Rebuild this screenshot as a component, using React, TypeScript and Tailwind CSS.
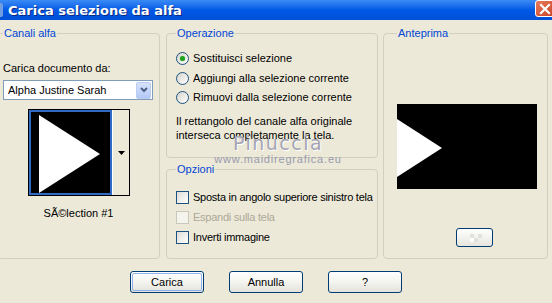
import React from "react";

const font = "font-['Liberation_Sans',Arial,sans-serif]";

function Radio({ checked, label }: { checked?: boolean; label: string }) {
  return (
    <div className="flex items-center h-[19.5px]">
      <div className="w-[13px] h-[13px] rounded-full border border-[#1c5180] bg-gradient-to-br from-[#d6d5cc] to-white flex items-center justify-center">
        {checked && <div className="w-[5px] h-[5px] rounded-full bg-[#21a121] shadow-[0_0_1px_#5bd35b]" />}
      </div>
      <span className="ml-[4px] text-black whitespace-nowrap">{label}</span>
    </div>
  );
}

function Check({ label, disabled }: { label: string; disabled?: boolean }) {
  return (
    <div className="flex items-center h-[20px]">
      <div
        className={
          disabled
            ? "shrink-0 w-[13px] h-[13px] border border-[#cac8bb] bg-[#f4f3ee]"
            : "shrink-0 w-[13px] h-[13px] border border-[#1c5180] bg-gradient-to-br from-[#dcdcd7] to-white"
        }
      />
      <span
        className={
          disabled
            ? "ml-[4px] text-[#aca899] whitespace-nowrap tracking-[-0.25px]"
            : "ml-[4px] text-black whitespace-nowrap tracking-[-0.25px]"
        }
      >
        {label}
      </span>
    </div>
  );
}

function Btn({ children, def }: { children: React.ReactNode; def?: boolean }) {
  return (
    <div className="w-[74px] h-[22px] rounded-[3px] border border-[#003c74] bg-gradient-to-b from-white via-[#f4f4f0] to-[#e3e2da] flex items-center justify-center p-[1px]">
      <div
        className={
          def
            ? "w-full h-full rounded-[2px] border border-[#8fb3ee] flex items-center justify-center text-black"
            : "w-full h-full flex items-center justify-center text-black"
        }
      >
        {children}
      </div>
    </div>
  );
}

export default function App() {
  return (
    <div className={`w-[552px] h-[303px] bg-[#ece9d8] overflow-hidden relative text-[11px] leading-[13px] ${font}`}>
      {/* title bar */}
      <div className="h-[20px] flex items-center justify-between bg-gradient-to-b from-[#3b8bf5] via-[#0058e6] to-[#0050d8]">
        <div className="flex items-center">
          <div className="w-[3px] h-[14px] bg-[#6f9fe0] rounded-r-[2px]" />
          <span className="ml-[5px] text-white font-bold text-[13px] font-['DejaVu_Sans',sans-serif] [text-shadow:1px_1px_0_#0a2a80]">
            Carica selezione da alfa
          </span>
        </div>
        <div className="self-start w-[21px] h-[17px] mr-[-4px] rounded-[3px] border border-white bg-gradient-to-br from-[#e77a5c] to-[#c8401f] flex items-center justify-start pl-[3px]">
          <svg width="12" height="12" viewBox="0 0 12 12">
            <path d="M2 2 L10 10 M10 2 L2 10" stroke="white" strokeWidth="2.2" strokeLinecap="square" />
          </svg>
        </div>
      </div>

      {/* main area */}
      <div className="flex mt-[7px] ml-[-3px]">
        {/* Canali alfa */}
        <fieldset className="w-[163px] h-[232px] border border-[#d0d0bf] rounded-[4px] pl-[5px] pr-[2px]">
          <legend className="ml-[0px] px-[1px] text-[#0046d5]">Canali alfa</legend>
          <div className="mt-[22px] text-black">Carica documento da:</div>
          <div className="mt-[5px] w-[150px] h-[20px] bg-white border border-[#7f9db9] flex items-center justify-between">
            <span className="ml-[4px] text-black">Alpha Justine Sarah</span>
            <div className="w-[15px] h-[17px] mr-[1px] rounded-[2px] bg-gradient-to-b from-[#d5e2fd] to-[#b3c9f6] border border-[#bccdf2] flex items-center justify-center">
              <svg width="8" height="6" viewBox="0 0 8 6">
                <path d="M1 1 L4 4 L7 1" stroke="#4d6185" strokeWidth="2" fill="none" />
              </svg>
            </div>
          </div>
          <div className="mt-[9px] ml-[25px] w-[102px] h-[87px] border border-black bg-[#ece9d8] flex">
            <div className="w-[83px] h-full border-[2px] border-[#316ac5] bg-black">
              <svg width="79" height="83" viewBox="0 0 79 83">
                <polygon points="8,3 69,42 8,81" fill="white" />
              </svg>
            </div>
            <div className="flex-1 flex items-center justify-center border-l border-white">
              <svg width="7" height="4" viewBox="0 0 7 4">
                <polygon points="0,0 7,0 3.5,4" fill="black" />
              </svg>
            </div>
          </div>
          <div className="mt-[11px] text-center pr-[3px] text-black">SÃ©lection #1</div>
        </fieldset>

        {/* middle column */}
        <div className="ml-[6px] w-[212px] flex flex-col">
          <fieldset className="h-[131px] border border-[#d0d0bf] rounded-[4px] pl-[9px]">
            <legend className="ml-[0px] px-[1px] text-[#0046d5]">Operazione</legend>
            <div className="mt-[9px]">
              <Radio checked label="Sostituisci selezione" />
              <Radio label="Aggiungi alla selezione corrente" />
              <Radio label="Rimuovi dalla selezione corrente" />
            </div>
            <div className="mt-[6px] leading-[14px] text-black">
              Il rettangolo del canale alfa originale
              <br />
              interseca completamente la tela.
            </div>
          </fieldset>
          <fieldset className="mt-[5px] h-[96px] border border-[#d0d0bf] rounded-[4px] pl-[9px]">
            <legend className="ml-[0px] px-[1px] text-[#0046d5]">Opzioni</legend>
            <div className="mt-[11px]">
              <Check label="Sposta in angolo superiore sinistro tela" />
              <Check label="Espandi sulla tela" disabled />
              <Check label="Inverti immagine" />
            </div>
          </fieldset>
        </div>

        {/* Anteprima */}
        <fieldset className="ml-[5px] w-[165px] h-[232px] border border-[#d0d0bf] rounded-[4px] pl-[13px]">
          <legend className="ml-[0px] px-[1px] text-[#0046d5]">Anteprima</legend>
          <div className="mt-[64px] w-[140px] h-[85px] bg-black">
            <svg width="140" height="85" viewBox="0 0 140 85">
              <polygon points="0,15 45,44 0,73" fill="white" />
            </svg>
          </div>
          <div className="mt-[39px] ml-[59px] w-[37px] h-[19px] rounded-[3px] border border-[#003c74] bg-gradient-to-b from-white to-[#e6e5de] flex items-center justify-center">
            <svg width="14" height="8" viewBox="0 0 14 8">
              <rect x="2" y="0" width="4" height="4" fill="#e2e2dc" />
              <rect x="6" y="4" width="4" height="4" fill="#e2e2dc" />
              <rect x="10" y="0" width="4" height="4" fill="#e2e2dc" />
              <rect x="2" y="4" width="4" height="4" fill="#ffffff" />
            </svg>
          </div>
        </fieldset>
      </div>

      {/* buttons */}
      <div className="flex mt-[12px] ml-[130px] gap-[25px]">
        <Btn def>Carica</Btn>
        <Btn>Annulla</Btn>
        <Btn>?</Btn>
      </div>

      {/* watermark */}
      <div className="absolute left-[216px] top-[133px] w-[124px] flex flex-col items-center pointer-events-none">
        <span className="text-[19px] leading-[20px] tracking-[1.5px] text-[#a4a4b4] font-['DejaVu_Sans',sans-serif] [text-shadow:1px_1px_0_#ffffff]">
          Pinuccia
        </span>
        <span className="text-[11px] leading-[12px] tracking-[0.8px] text-[#9a9aae] font-['Liberation_Sans',sans-serif]">
          www.maidiregrafica.eu
        </span>
      </div>
    </div>
  );
}
